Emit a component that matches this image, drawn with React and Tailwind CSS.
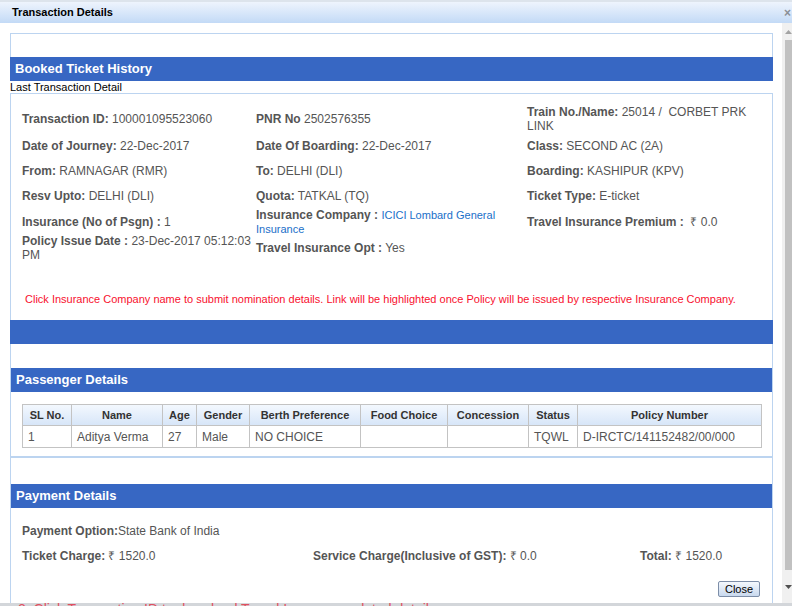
import React from 'react';

const rupee = '\u20B9';

// rows of the ticket detail grid: [height, col1, col2, col3]
const detailRows = [
  {
    h: 'h-[29px]',
    cells: [
      <><b>Transaction ID:</b> 100001095523060</>,
      <><b>PNR No</b> 2502576355</>,
      <><b>Train No./Name:</b> 25014 /{'\u00a0'} CORBET PRK LINK</>,
    ],
  },
  {
    h: 'h-[25px]',
    cells: [
      <><b>Date of Journey:</b> 22-Dec-2017</>,
      <><b>Date Of Boarding:</b> 22-Dec-2017</>,
      <><b>Class:</b> SECOND AC (2A)</>,
    ],
  },
  {
    h: 'h-[25px]',
    cells: [
      <><b>From:</b> RAMNAGAR (RMR)</>,
      <><b>To:</b> DELHI (DLI)</>,
      <><b>Boarding:</b> KASHIPUR (KPV)</>,
    ],
  },
  {
    h: 'h-[25px]',
    cells: [
      <><b>Resv Upto:</b> DELHI (DLI)</>,
      <><b>Quota:</b> TATKAL (TQ)</>,
      <><b>Ticket Type:</b> E-ticket</>,
    ],
  },
  {
    h: 'h-[25px]',
    cells: [
      <><b>Insurance (No of Psgn) :</b> 1</>,
      <>
        <b>Insurance Company : </b>
        <a href="#" className="text-[11px] text-[#1a6fc9]">ICICI Lombard General Insurance</a>
      </>,
      <><b>Travel Insurance Premium :</b> {'\u00a0'}{rupee} 0.0</>,
    ],
  },
  {
    h: 'h-[29px]',
    cells: [
      <><b>Policy Issue Date :</b> 23-Dec-2017 05:12:03 PM</>,
      <><b>Travel Insurance Opt :</b> Yes</>,
      null,
    ],
  },
];

const columns = [
  { label: 'SL No.', w: 'w-[49px]' },
  { label: 'Name', w: 'w-[91px]' },
  { label: 'Age', w: 'w-[34px]' },
  { label: 'Gender', w: 'w-[53px]' },
  { label: 'Berth Preference', w: 'w-[111px]' },
  { label: 'Food Choice', w: 'w-[87px]' },
  { label: 'Concession', w: 'w-[81px]' },
  { label: 'Status', w: 'w-[49px]' },
  { label: 'Policy Number', w: 'w-[184px]' },
];

const passengers = [
  ['1', 'Aditya Verma', '27', 'Male', 'NO CHOICE', '', '', 'TQWL', 'D-IRCTC/141152482/00/000'],
];

function SectionHeader({ children }) {
  return (
    <div className="h-[24px] bg-[#3767c3] pl-[5px] flex items-center text-[13px] font-bold text-white">
      {children}
    </div>
  );
}

function App() {
  return (
    <div
      className="relative w-[792px] h-[606px] overflow-hidden bg-white"
      style={{ fontFamily: '"Liberation Sans", Arial, sans-serif' }}
    >
      {/* dialog title bar */}
      <div className="h-[23px] border-t-2 border-[#dde4ec] bg-gradient-to-b from-[#eef4fd] to-[#c3daf6] flex items-center justify-between pl-[12px] pr-[1px]">
        <span className="text-[11px] font-bold text-black">Transaction Details</span>
        <span className="text-[12px] font-bold text-[#8a8f96] leading-none">×</span>
      </div>

      <div className="flex h-[580px]">
        {/* scrollable content */}
        <div className="w-[782px] pl-[10px]">
          <div className="w-[763px] mt-[10px]">
            <div className="h-[24px] border border-b-0 border-[#bcd4f0]" />
            <SectionHeader>Booked Ticket History</SectionHeader>
            <div className="h-[12px] text-[11px] leading-[12px] text-black">Last Transaction Detail</div>

            {/* transaction detail box */}
            <div className="h-[227px] border border-b-0 border-[#bcd4f0] pt-[10px] pl-[11px] text-[12px] leading-[14px] text-[#555]">
              {detailRows.map((row, i) => (
                <div key={i} className={`grid grid-cols-[234px_271px_245px] ${row.h}`}>
                  {row.cells.map((cell, j) => (
                    <div key={j} className="flex items-center">
                      <div>{cell}</div>
                    </div>
                  ))}
                </div>
              ))}
              <div className="mt-[31px] pl-[3px] text-[11px] leading-[13px] text-[#f8102e]">
                Click Insurance Company name to submit nomination details. Link will be highlighted once Policy will be issued by respective Insurance Company.
              </div>
            </div>
            <div className="h-[24px] bg-[#3767c3]" />

            {/* passenger box */}
            <div className="border-x border-b-2 border-[#bcd4f0] h-[114px]">
              <div className="h-[24px]" />
              <SectionHeader>Passenger Details</SectionHeader>
              <div className="pt-[12px] pl-[11px]">
                <table className="border-collapse text-[12px] text-[#555]">
                  <thead>
                    <tr className="h-[21px] bg-gradient-to-b from-[#f3f8fe] to-[#d6e5f8]">
                      {columns.map((c) => (
                        <th key={c.label} className={`${c.w} border border-[#c3c3c3] text-[11px] font-bold text-[#333] text-center p-0`}>
                          {c.label}
                        </th>
                      ))}
                    </tr>
                  </thead>
                  <tbody>
                    {passengers.map((p, i) => (
                      <tr key={i} className="h-[22px]">
                        {p.map((v, j) => (
                          <td key={j} className="border border-[#c3c3c3] pl-[5px] p-0 font-normal">
                            {v}
                          </td>
                        ))}
                      </tr>
                    ))}
                  </tbody>
                </table>
              </div>
            </div>

            {/* payment box */}
            <div className="border-x border-[#bcd4f0] h-[150px]">
              <div className="h-[26px]" />
              <SectionHeader>Payment Details</SectionHeader>
              <div className="pt-[16px] pl-[11px] pr-[12px] text-[12px] leading-[14px] text-[#555]">
                <div className="h-[25px]">
                  <b>Payment Option:</b>State Bank of India
                </div>
                <div className="grid grid-cols-[291px_327px_1fr] h-[26px]">
                  <div><b>Ticket Charge:</b> {rupee} 1520.0</div>
                  <div><b>Service Charge(Inclusive of GST):</b> {rupee} 0.0</div>
                  <div><b>Total:</b> {rupee} 1520.0</div>
                </div>
                <div className="flex justify-end mt-[6px]">
                  <button className="w-[42px] h-[16px] border border-[#7d8ea8] rounded-[2px] bg-gradient-to-b from-[#f4f8fd] to-[#c9d9ee] text-[11px] leading-[14px] text-black">
                    Close
                  </button>
                </div>
              </div>
            </div>
          </div>
        </div>

        {/* scrollbar */}
        <div className="w-[10px] bg-[#f0f0f0] flex flex-col pl-[3px]">
          <div className="h-[17px] flex items-center justify-center">
            <svg width="7" height="4" viewBox="0 0 7 4"><path d="M0 4 L3.5 0 L7 4 Z" fill="#a3a3a3" /></svg>
          </div>
          <div className="h-[530px] bg-[#c1c1c1]" />
          <div className="flex-1 flex items-center justify-center">
            <svg width="7" height="4" viewBox="0 0 7 4"><path d="M0 0 L3.5 4 L7 0 Z" fill="#505050" /></svg>
          </div>
        </div>
      </div>

      {/* background page peeking below the dialog */}
      <div className="absolute left-0 bottom-0 w-[792px] h-[3px] bg-[#d3d6da] overflow-hidden">
        <div className="pl-[18px] text-[14px] leading-[12px] text-[#e05060] whitespace-nowrap">
          2. Click Transaction ID to download Travel Insurance related details
        </div>
      </div>
    </div>
  );
}

export default App;
